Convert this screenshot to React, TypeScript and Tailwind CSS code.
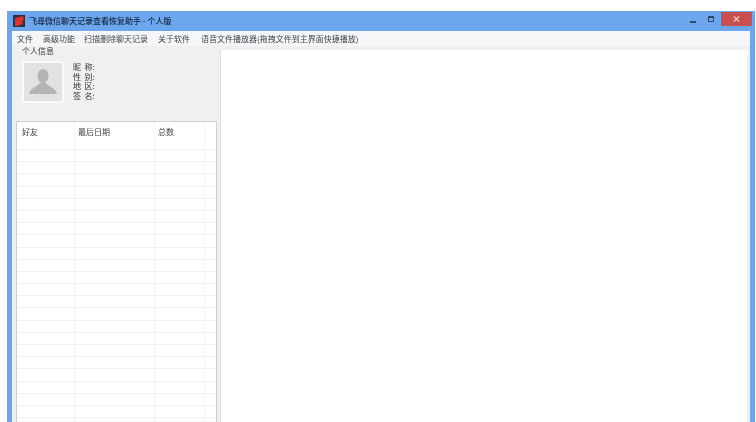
const font = { fontFamily: '"Noto Sans CJK SC", "Liberation Sans", sans-serif' };

const menu = [
  ['文件', 'w-[26px]'],
  ['高级功能', 'w-[41px]'],
  ['扫描删除聊天记录', 'w-[74px]'],
  ['关于软件', 'w-[43px]'],
  ['语音文件播放器(拖拽文件到主界面快捷播放)', 'w-[190px]'],
];

const rows = Array.from({ length: 24 });

function Cells({ labels }: { labels?: string[] }) {
  return (
    <div className="flex h-full">
      <div className="w-[58px] border-r border-[#f3f3f3] pl-[5px] pt-[5px]">{labels?.[0]}</div>
      <div className="w-[80px] border-r border-[#f3f3f3] pl-[3px] pt-[5px]">{labels?.[1]}</div>
      <div className="w-[50px] border-r border-[#f3f3f3] pl-[3px] pt-[5px]">{labels?.[2]}</div>
      <div className="flex-1" />
    </div>
  );
}

export default function App() {
  return (
    <div className="w-[756px] h-[422px] overflow-hidden bg-white pt-[11px] pl-[7px] pr-px" style={font}>
      <div className="h-[411px] bg-[#6ca6ec] px-[5px] flex flex-col overflow-hidden">
        <div className="h-[20px] shrink-0 flex items-center">
          <svg width="12" height="12" viewBox="0 0 12 12" className="ml-px shrink-0 blur-[0.4px]">
            <rect width="12" height="12" fill="#2f3140" />
            <path d="M2 11 L2 3 L10 1 L11 5 L9 6 L10 9 L6 10 L5 11 Z" fill="#e0302c" />
          </svg>
          <span className="ml-[4px] text-[8px] leading-none font-medium text-[#13233c] blur-[0.3px]">飞尋微信聊天记录查看恢复助手 - 个人版</span>
          <div className="ml-auto -mr-[2px] flex items-start h-full">
            <div className="w-[6px] h-[2px] bg-[#2c4a70] mt-[10px] mr-[12px]" />
            <div className="w-[6px] h-[6px] border border-[#2c4a70] border-t-2 mt-[5px] mr-[7px]" />
            <div className="w-[31px] h-[14px] mt-px bg-[#c9504f] text-[#f6dada] text-[9px] leading-[13px] text-center font-bold">×</div>
          </div>
        </div>
        <div className="flex-1 flex flex-col bg-[#f0f0f0] min-h-0">
          <div className="h-[15px] shrink-0 bg-[#f5f6f7] flex items-center pl-[5px] text-[8px] leading-none text-[#3f444a] blur-[0.3px]">
            {menu.map(([label, w]) => (
              <span key={label} className={`${w} whitespace-nowrap`}>{label}</span>
            ))}
          </div>
          <div className="flex-1 flex min-h-0">
            <div className="w-[208px] shrink-0 pl-[4px] flex flex-col">
              <div className="h-[75px] shrink-0">
                <div className="pl-[6px] text-[8px] leading-[10px] text-[#333] blur-[0.3px]">个人信息</div>
                <div className="flex mt-[5px] ml-[6px]">
                  <div className="w-[42px] h-[42px] rounded-[3px] bg-[#e2e2e2] border-2 border-[#fafafa] flex items-center justify-center">
                    <svg width="28" height="26" viewBox="0 0 28 26">
                      <ellipse cx="14" cy="7" rx="5.5" ry="7" fill="#b4b4b4" />
                      <path d="M0 25 C1 19 8 18 11 14 L17 14 C20 18 27 19 28 25 Z" fill="#b4b4b4" />
                    </svg>
                  </div>
                  <div className="ml-[9px] mt-px text-[8px] leading-[9.5px] text-[#333] blur-[0.3px] whitespace-pre">
                    <div>昵  称:</div>
                    <div>性  别:</div>
                    <div>地  区:</div>
                    <div>签  名:</div>
                  </div>
                </div>
              </div>
              <div className="flex-1 w-[201px] min-h-0 border border-b-0 border-[#cfcfcf] bg-white overflow-hidden text-[8px] leading-[10px] text-[#444]">
                <div className="h-[28px] border-b border-[#f3f3f3] blur-[0.3px]">
                  <Cells labels={['好友', '最后日期', '总数']} />
                </div>
                {rows.map((_, i) => (
                  <div key={i} className="h-[12.2px] border-b border-[#f3f3f3]">
                    <Cells />
                  </div>
                ))}
              </div>
            </div>
            <div className="flex-1 flex flex-col min-w-0 pt-[4px] pr-[3px]">
              <div className="flex-1 bg-white border-l border-[#dddddd]" />
            </div>
          </div>
        </div>
      </div>
    </div>
  );
}
